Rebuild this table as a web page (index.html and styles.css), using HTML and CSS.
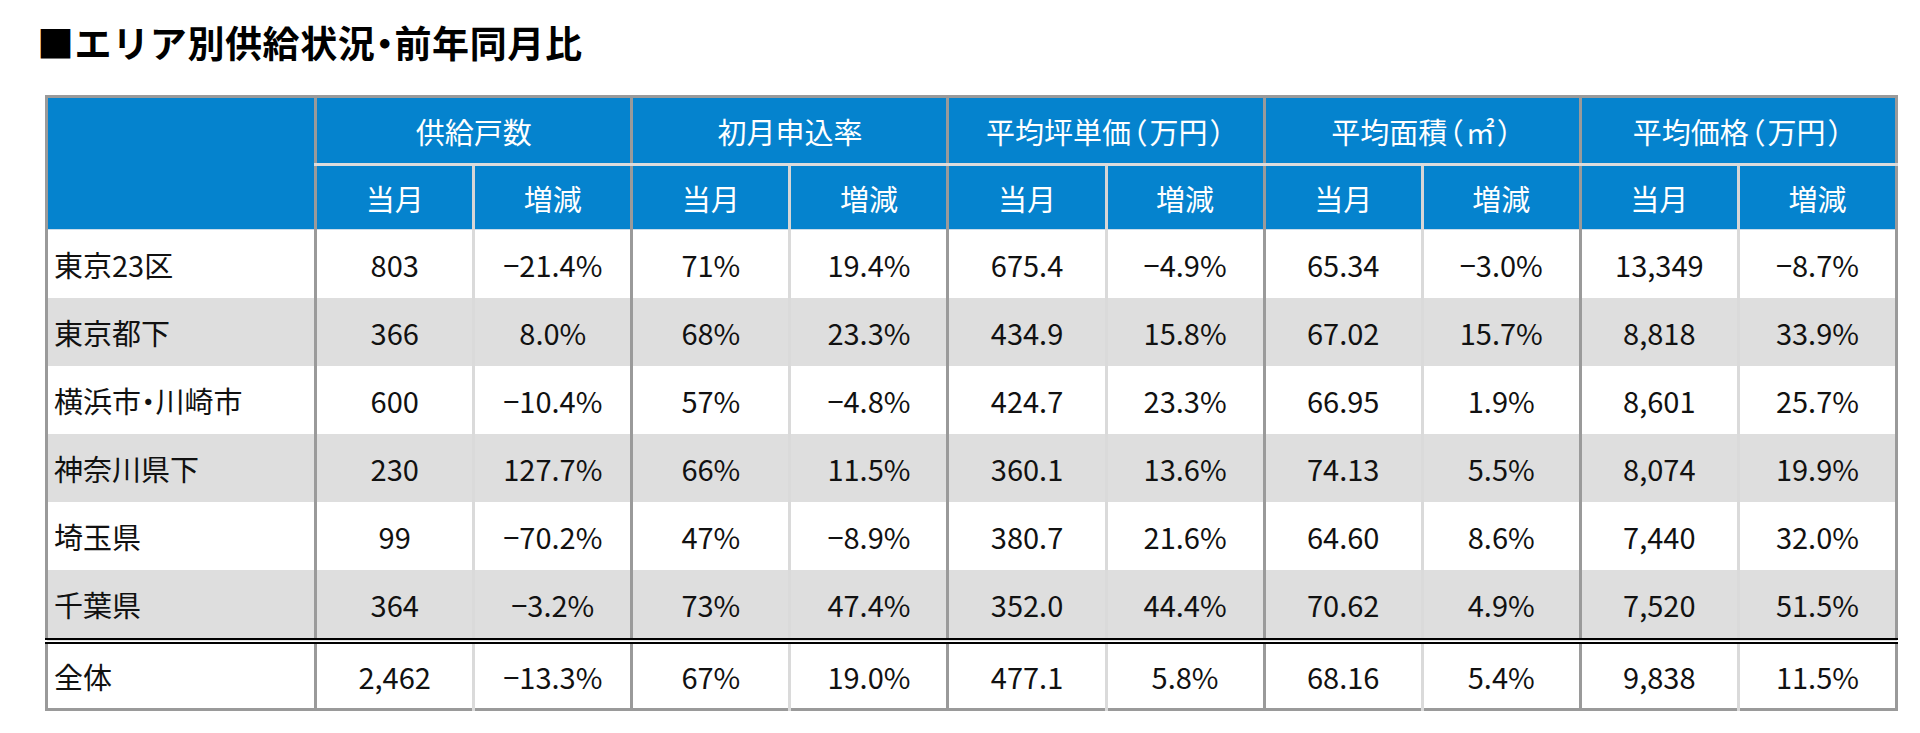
FILE: index.html
```html
<!DOCTYPE html>
<html lang="ja">
<head>
<meta charset="utf-8">
<title>エリア別供給状況・前年同月比</title>
<link rel="stylesheet" href="styles.css">
</head>
<body>
<h1 class="title">■エリア別供給状況<span class="nd">・</span>前年同月比</h1>
<table class="tbl">
  <colgroup>
    <col class="c-label">
    <col class="c-val"><col class="c-val">
    <col class="c-val"><col class="c-val">
    <col class="c-val"><col class="c-val">
    <col class="c-val"><col class="c-val">
    <col class="c-val"><col class="c-val">
  </colgroup>
  <thead>
    <tr class="h1">
      <th class="corner" rowspan="2"></th>
      <th class="grp" colspan="2">供給戸数</th>
      <th class="grp" colspan="2">初月申込率</th>
      <th class="grp" colspan="2">平均坪単価<span class="pr">（</span>万円<span class="pr">）</span></th>
      <th class="grp" colspan="2">平均面積<span class="pr">（</span>㎡<span class="pr">）</span></th>
      <th class="grp" colspan="2">平均価格<span class="pr">（</span>万円<span class="pr">）</span></th>
    </tr>
    <tr class="h2">
      <th class="g1">当月</th><th class="g2">増減</th>
      <th class="g1">当月</th><th class="g2">増減</th>
      <th class="g1">当月</th><th class="g2">増減</th>
      <th class="g1">当月</th><th class="g2">増減</th>
      <th class="g1">当月</th><th class="g2">増減</th>
    </tr>
  </thead>
  <tbody>
    <tr>
      <td class="lbl">東京23区</td>
      <td class="g1">803</td><td class="g2">−21.4%</td>
      <td class="g1">71%</td><td class="g2">19.4%</td>
      <td class="g1">675.4</td><td class="g2">−4.9%</td>
      <td class="g1">65.34</td><td class="g2">−3.0%</td>
      <td class="g1">13,349</td><td class="g2">−8.7%</td>
    </tr>
    <tr class="alt">
      <td class="lbl">東京都下</td>
      <td class="g1">366</td><td class="g2">8.0%</td>
      <td class="g1">68%</td><td class="g2">23.3%</td>
      <td class="g1">434.9</td><td class="g2">15.8%</td>
      <td class="g1">67.02</td><td class="g2">15.7%</td>
      <td class="g1">8,818</td><td class="g2">33.9%</td>
    </tr>
    <tr>
      <td class="lbl">横浜市<span class="nd2">・</span>川崎市</td>
      <td class="g1">600</td><td class="g2">−10.4%</td>
      <td class="g1">57%</td><td class="g2">−4.8%</td>
      <td class="g1">424.7</td><td class="g2">23.3%</td>
      <td class="g1">66.95</td><td class="g2">1.9%</td>
      <td class="g1">8,601</td><td class="g2">25.7%</td>
    </tr>
    <tr class="alt">
      <td class="lbl">神奈川県下</td>
      <td class="g1">230</td><td class="g2">127.7%</td>
      <td class="g1">66%</td><td class="g2">11.5%</td>
      <td class="g1">360.1</td><td class="g2">13.6%</td>
      <td class="g1">74.13</td><td class="g2">5.5%</td>
      <td class="g1">8,074</td><td class="g2">19.9%</td>
    </tr>
    <tr>
      <td class="lbl">埼玉県</td>
      <td class="g1">99</td><td class="g2">−70.2%</td>
      <td class="g1">47%</td><td class="g2">−8.9%</td>
      <td class="g1">380.7</td><td class="g2">21.6%</td>
      <td class="g1">64.60</td><td class="g2">8.6%</td>
      <td class="g1">7,440</td><td class="g2">32.0%</td>
    </tr>
    <tr class="alt">
      <td class="lbl">千葉県</td>
      <td class="g1">364</td><td class="g2">−3.2%</td>
      <td class="g1">73%</td><td class="g2">47.4%</td>
      <td class="g1">352.0</td><td class="g2">44.4%</td>
      <td class="g1">70.62</td><td class="g2">4.9%</td>
      <td class="g1">7,520</td><td class="g2">51.5%</td>
    </tr>
    <tr class="total">
      <td class="lbl">全体</td>
      <td class="g1">2,462</td><td class="g2">−13.3%</td>
      <td class="g1">67%</td><td class="g2">19.0%</td>
      <td class="g1">477.1</td><td class="g2">5.8%</td>
      <td class="g1">68.16</td><td class="g2">5.4%</td>
      <td class="g1">9,838</td><td class="g2">11.5%</td>
    </tr>
  </tbody>
</table>
</body>
</html>
```

FILE: styles.css
```css
html, body {
  margin: 0;
  padding: 0;
  background: #ffffff;
}

body {
  font-family: "Noto Sans CJK JP", "Noto Sans", sans-serif;
  color: #111111;
}

.title {
  margin: 0;
  padding: 24px 0 0 37px;
  height: 37px;
  font-size: 37px;
  line-height: 37px;
  font-weight: 700;
  color: #000000;
  letter-spacing: 0.6px;
}

.title .nd,
.lbl .nd2 {
  font-feature-settings: "halt";
}

.tbl {
  margin: 34px 0 0 45px;
  width: 1853px;
  table-layout: fixed;
  border-collapse: collapse;
  border: 3px solid #9a9a9a;
}

.c-label { width: 269px; }
.c-val { width: 158px; }

.tbl th {
  background: #0583ce;
  color: #ffffff;
  font-weight: 400;
  font-size: 29px;
  padding: 0;
  text-align: center;
  white-space: nowrap;
}

.h1 th { height: 65px; }
.h2 th { height: 63px; }

.corner { border-bottom: 1px solid #c9dcea; }

.h1 .grp {
  border-left: 3px solid #9a9a9a;
  border-bottom: 3px solid #dcdcdc;
}

.pr {
  font-feature-settings: "halt";
  margin: 0 2px;
}

.h2 th { border-bottom: 1px solid #c9dcea; }
.h2 .g1 { border-left: 3px solid #9a9a9a; }
.h2 .g2 { border-left: 3px solid #d6d6d6; }

.tbl td {
  height: 68px;
  padding: 0;
  text-align: center;
  font-family: "Noto Sans CJK JP", sans-serif;
  font-size: 29px;
  white-space: nowrap;
}

.tbl td.lbl {
  text-align: left;
  padding-left: 6px;
}

.tbl td.g1 { border-left: 3px solid #9a9a9a; }
.tbl td.g2 { border-left: 3px solid #dadada; }

.alt td { background: #dedede; }

.total td {
  height: 64px;
  border-top: 6px double #000000;
}
```
